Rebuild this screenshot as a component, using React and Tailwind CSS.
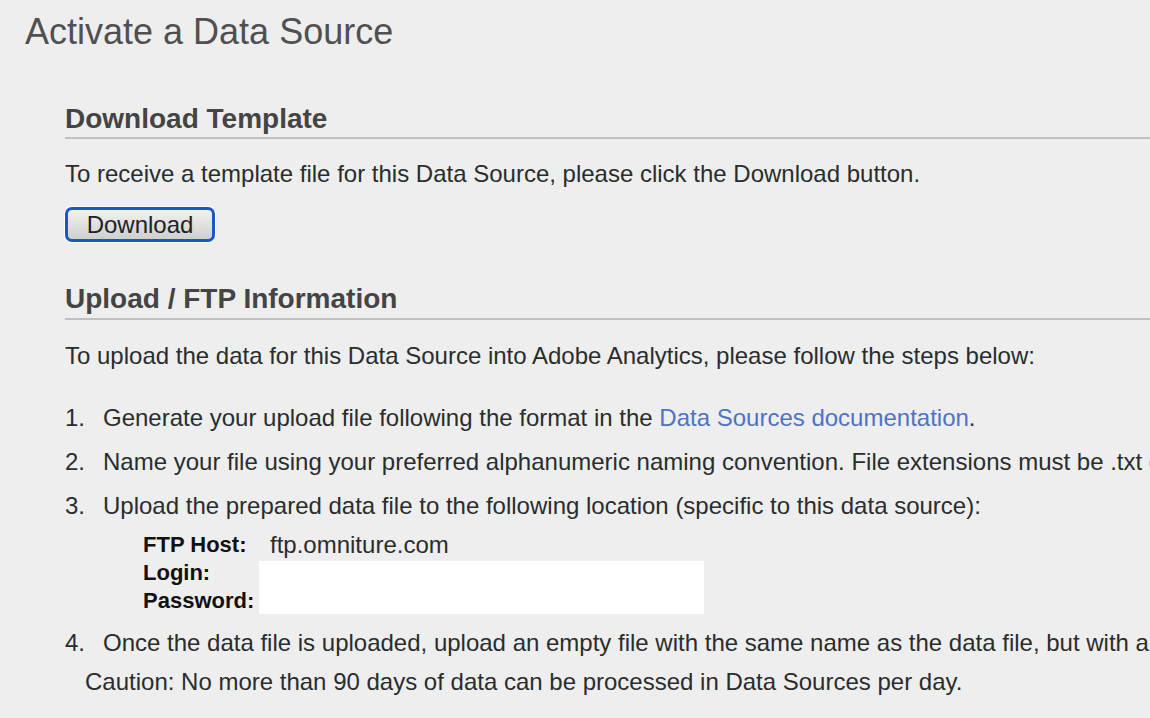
import React from 'react';

const steps = [
  {
    n: '1.',
    text: (
      <>
        Generate your upload file following the format in the{' '}
        <a href="#" className="text-[#4d74c4]">Data Sources documentation</a>.
      </>
    ),
  },
  {
    n: '2.',
    text: 'Name your file using your preferred alphanumeric naming convention. File extensions must be .txt or .zip.',
  },
  {
    n: '3.',
    text: 'Upload the prepared data file to the following location (specific to this data source):',
  },
];

const Heading = ({ children, className = '' }) => (
  <h2
    className={`text-[28px] leading-[32px] font-bold text-[#444] border-b-2 border-[#c0c0c0] ${className}`}
  >
    {children}
  </h2>
);

const App = () => {
  return (
    <div
      className="w-[1150px] h-[718px] overflow-hidden bg-[#eeeeee] text-[#2a2d2d] whitespace-nowrap"
      style={{ fontFamily: '"Liberation Sans", Arial, sans-serif' }}
    >
      {/* page title */}
      <h1 className="pl-[25px] pt-[12px] text-[36px] leading-[40px] text-[#505050] font-normal">
        Activate a Data Source
      </h1>

      <div className="pl-[65px]">
        {/* ---------- download template ---------- */}
        <Heading className="mt-[51px] pb-[2px]">Download Template</Heading>
        <p className="mt-[21px] text-[24px] leading-[28px]">
          To receive a template file for this Data Source, please click the Download button.
        </p>
        <div className="mt-[19px] flex">
          <button className="w-[150px] h-[35px] rounded-[7px] border-[3px] border-[#1b55c8] shadow-[0_0_0_1px_#ffffff] bg-gradient-to-b from-[#f2f2f2] to-[#cfcfcc] text-[24px] leading-[26px] text-[#222]">
            Download
          </button>
        </div>

        {/* ---------- upload / ftp ---------- */}
        <Heading className="mt-[41px] pb-[3px]">Upload / FTP Information</Heading>
        <p className="mt-[22px] text-[24px] leading-[28px]">
          To upload the data for this Data Source into Adobe Analytics, please follow the steps below:
        </p>

        <ol className="mt-[34px] text-[24px] leading-[28px]">
          {steps.map((s, i) => (
            <li key={s.n} className={`flex ${i > 0 ? 'mt-[16px]' : ''}`}>
              <span className="w-[38px] shrink-0">{s.n}</span>
              <span>{s.text}</span>
            </li>
          ))}
        </ol>

        {/* ftp details */}
        <div className="mt-[11px] ml-[78px] grid grid-cols-[116px_445px] grid-rows-[28px_28px_27px]">
          <div className="text-[22px] leading-[28px] font-bold text-[#111]">FTP Host:</div>
          <div className="pl-[11px] text-[24px] leading-[28px]">ftp.omniture.com</div>
          <div className="text-[22px] leading-[28px] font-bold text-[#111]">Login:</div>
          <div className="row-span-2 mt-[2px] bg-white"></div>
          <div className="text-[22px] leading-[27px] font-bold text-[#111]">Password:</div>
        </div>

        <div className="mt-[15px] flex text-[24px] leading-[28px]">
          <span className="w-[38px] shrink-0">4.</span>
          <span>
            Once the data file is uploaded, upload an empty file with the same name as the data file, but with a .fin extension.
          </span>
        </div>
        <p className="mt-[11px] ml-[20px] text-[24px] leading-[28px]">
          Caution: No more than 90 days of data can be processed in Data Sources per day.
        </p>
      </div>
    </div>
  );
};

export default App;
